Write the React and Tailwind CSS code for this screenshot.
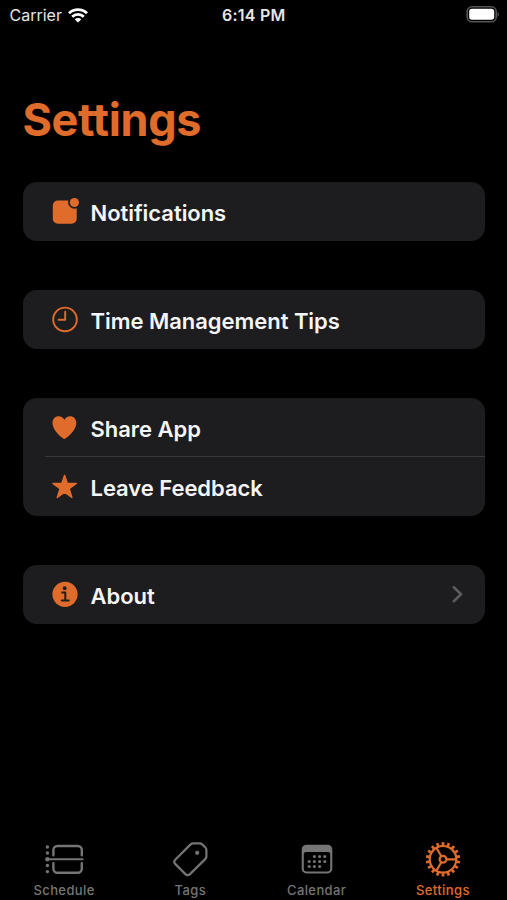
// App.jsx — Settings screen with grouped rows and a bottom tab bar

const iconProps = { width: 26, height: 26, viewBox: "0 0 26 26", fill: "currentColor", className: "shrink-0 overflow-visible" };

function BadgeIcon() {
  return (
    <svg {...iconProps}>
      <path d="M16.3 2.6H5.8A5 5 0 0 0 .8 7.6V20.8a5 5 0 0 0 5 5H19.7a5 5 0 0 0 5-5V10.2A6.4 6.4 0 0 1 16.3 2.6Z" />
      <circle cx="22.4" cy="4.5" r="4.6" />
    </svg>
  );
}

function ClockIcon() {
  return (
    <svg {...iconProps} fill="none" stroke="currentColor" strokeWidth="1.9" strokeLinecap="round" strokeLinejoin="round">
      <circle cx="13" cy="13.4" r="11.8" />
      <path d="M13.2 5.7V13.8H6.6" />
    </svg>
  );
}

function HeartIcon() {
  return (
    <svg {...iconProps}>
      <path d="M12.4 25C11.8 25 0.5 17.4 0.5 9C0.5 5 3.2 2.3 6.7 2.3C9.2 2.3 11.2 3.6 12.4 5.9C13.6 3.6 15.6 2.3 18.1 2.3C21.6 2.3 24.3 5 24.3 9C24.3 17.4 13 25 12.4 25Z" />
    </svg>
  );
}

function StarIcon() {
  return (
    <svg {...iconProps} stroke="currentColor" strokeWidth="1.4" strokeLinejoin="round">
      <path d="M12.6 2.3L15.4 10.4H24.3L17.2 15.6L19.9 24.5L12.6 19.1L5.3 24.5L8 15.6L0.9 10.4H9.8Z" />
    </svg>
  );
}

function InfoIcon() {
  return (
    <svg {...iconProps}>
      <circle cx="13" cy="13.3" r="12.6" />
      <circle cx="12.7" cy="7.2" r="1.9" fill="#1d1d1f" />
      <path d="M10.2 11.6H13.3V19.3M9.8 19.6H16.7" fill="none" stroke="#1d1d1f" strokeWidth="2" strokeLinecap="round" strokeLinejoin="round" />
    </svg>
  );
}

function ScheduleIcon() {
  return (
    <svg width="40" height="36" viewBox="0 0 40 36" fill="none" stroke="currentColor" strokeWidth="2.4" strokeLinecap="round">
      <path d="M9.4 14.2V9A4 4 0 0 1 13.4 5H33.8A4 4 0 0 1 37.8 9V14.2" />
      <path d="M9.4 22.2V27.7A4 4 0 0 0 13.4 31.7H33.8A4 4 0 0 0 37.8 27.7V22.2" />
      <path d="M3.4 18.3H38.6" strokeWidth="2" />
      <g fill="currentColor" stroke="none">
        <circle cx="3.4" cy="6" r="1.7" />
        <circle cx="3.4" cy="12" r="1.7" />
        <circle cx="3.4" cy="18.3" r="2.2" />
        <circle cx="3.4" cy="24.5" r="1.7" />
        <circle cx="3.4" cy="30.6" r="1.7" />
      </g>
    </svg>
  );
}

function TagIcon() {
  return (
    <svg width="36" height="36" viewBox="0 0 36 36" fill="none" stroke="currentColor" strokeWidth="2.2" strokeLinejoin="round">
      <path d="M3.2 18.7L18.6 3.4Q19.8 2.3 21.4 2.3H27.5Q29.1 2.3 30.2 3.4L33.2 6.3Q34.4 7.5 34.4 9.1V15.3Q34.4 16.9 33.2 18.1L18 33.1Q15.6 35.3 13.4 33.1L3.2 22.9Q1.2 20.7 3.2 18.7Z" />
      <circle cx="25.2" cy="11.8" r="2.1" fill="currentColor" stroke="none" />
    </svg>
  );
}

const calendarDots = [
  [13.4, 12.7], [18.6, 12.7], [23.8, 12.7],
  [8.2, 17.7], [13.4, 17.7], [18.6, 17.7], [23.8, 17.7],
  [8.2, 22.8], [13.4, 22.8], [18.6, 22.8],
];

function CalendarIcon() {
  return (
    <svg className="ml-px" width="32" height="36" viewBox="0 -2.7 32 36" fill="currentColor">
      <path fillRule="evenodd" d="M5.5 1H26.5A4.8 4.8 0 0 1 31.3 5.8V25A4.8 4.8 0 0 1 26.5 29.8H5.5A4.8 4.8 0 0 1 .7 25V5.8A4.8 4.8 0 0 1 5.5 1ZM4.8 8.2A2 2 0 0 0 2.8 10.2V25.4A2.3 2.3 0 0 0 5.1 27.7H26.9A2.3 2.3 0 0 0 29.2 25.4V10.2A2 2 0 0 0 27.2 8.2Z" />
      {calendarDots.map(([x, y]) => (
        <circle key={`${x}-${y}`} cx={x} cy={y} r="1.5" />
      ))}
    </svg>
  );
}

function GearIcon() {
  const teeth = Array.from({ length: 18 }, (_, i) => i * 20);
  return (
    <svg width="36" height="36" viewBox="-18 -18.3 36 36" fill="none" stroke="currentColor" strokeWidth="2.2">
      <circle r="13.3" />
      <circle r="3.4" />
      <path d="M3.4 0H13.4M-1.7 -3L-6.7 -11.6M-1.7 3L-6.7 11.6" />
      {teeth.map((angle) => (
        <path key={angle} d="M14 0H17.2" strokeWidth="2.7" transform={`rotate(${angle + 10})`} />
      ))}
    </svg>
  );
}

const groups = [
  [{ label: "Notifications", Icon: BadgeIcon }],
  [{ label: "Time Management Tips", Icon: ClockIcon }],
  [
    { label: "Share App", Icon: HeartIcon },
    { label: "Leave Feedback", Icon: StarIcon },
  ],
  [{ label: "About", Icon: InfoIcon, chevron: true }],
];

const tabs = [
  { label: "Schedule", Icon: ScheduleIcon },
  { label: "Tags", Icon: TagIcon },
  { label: "Calendar", Icon: CalendarIcon },
  { label: "Settings", Icon: GearIcon, active: true },
];

function StatusBar() {
  return (
    <div className="grid grid-cols-3 items-center h-[30px] pl-[9.5px] pr-[8px] text-[#e6e6e6]">
      <div className="flex items-center gap-[6px]">
        <span className="text-[16px] leading-[30px]">Carrier</span>
        <svg width="20" height="15" viewBox="0 0 20 15" fill="none" stroke="#fff" strokeWidth="2.8">
          <path d="M1 5.3A12.8 12.8 0 0 1 19 5.3" />
          <path d="M4.2 8.8A8.2 8.2 0 0 1 15.8 8.8" />
          <path d="M10 14.6L6.8 11.4A4.6 4.6 0 0 1 13.2 11.4Z" fill="#fff" stroke="none" />
        </svg>
      </div>
      <span className="-ml-px text-center text-[16px] leading-[30px] font-semibold tracking-[0.2px]">6:14 PM</span>
      <svg className="justify-self-end" width="33" height="18" viewBox="0 0 33 18">
        <rect x="1.2" y="0.8" width="29" height="15" rx="4.8" fill="none" stroke="#555" strokeWidth="1.6" />
        <rect x="3.2" y="2.8" width="25" height="11" rx="2.8" fill="#fff" />
        <path d="M31.5 5.8V11Q32.9 10 32.9 8.4T31.5 5.8Z" fill="#555" />
      </svg>
    </div>
  );
}

function Row({ label, Icon, chevron, divided }) {
  return (
    <li>
      {divided && <div className="ml-[22px] -mt-px h-px bg-[#38383a]" />}
      <div className="flex items-center h-[59px] pl-[29px] pr-[22px]">
        <span className="text-[#e06c2c]"><Icon /></span>
        <span className="ml-[13px] pt-[4px] text-[22px] leading-7 font-semibold tracking-[-0.04px] text-[#f5f5f5] whitespace-nowrap">{label}</span>
        {chevron && (
          <svg className="ml-auto" width="11" height="18" viewBox="0 0 11 18" fill="none" stroke="#5b5b5e" strokeWidth="2.6" strokeLinecap="round" strokeLinejoin="round">
            <path d="M1.8 2.2L9 9.2L1.8 16.2" />
          </svg>
        )}
      </div>
    </li>
  );
}

export default function App() {
  return (
    <div className="flex flex-col w-full h-[900px] overflow-hidden bg-black font-['Inter','Liberation_Sans',sans-serif]">
      <StatusBar />
      <main className="flex-1 px-[22.5px]">
        <h1 className="pt-[62px] text-[45px] leading-[56px] font-bold tracking-[-0.35px] text-[#e06c2c]">Settings</h1>
        <div className="mt-[33.5px] flex flex-col gap-[49px]">
          {groups.map((rows) => (
            <ul key={rows[0].label} className="rounded-[14px] bg-[#1d1d1f]">
              {rows.map((row, i) => (
                <Row key={row.label} {...row} divided={i > 0} />
              ))}
            </ul>
          ))}
        </div>
      </main>
      <nav className="grid grid-cols-4 h-[59px] pl-[1px] pr-[1px]">
        {tabs.map(({ label, Icon, active }) => (
          <div key={label} className={`flex flex-col items-center ${active ? "text-[#e06c2c]" : "text-[#757575]"}`}>
            <Icon />
            <span className="mt-[5px] text-[13px] leading-4 font-medium tracking-[0.4px]">{label}</span>
          </div>
        ))}
      </nav>
    </div>
  );
}
